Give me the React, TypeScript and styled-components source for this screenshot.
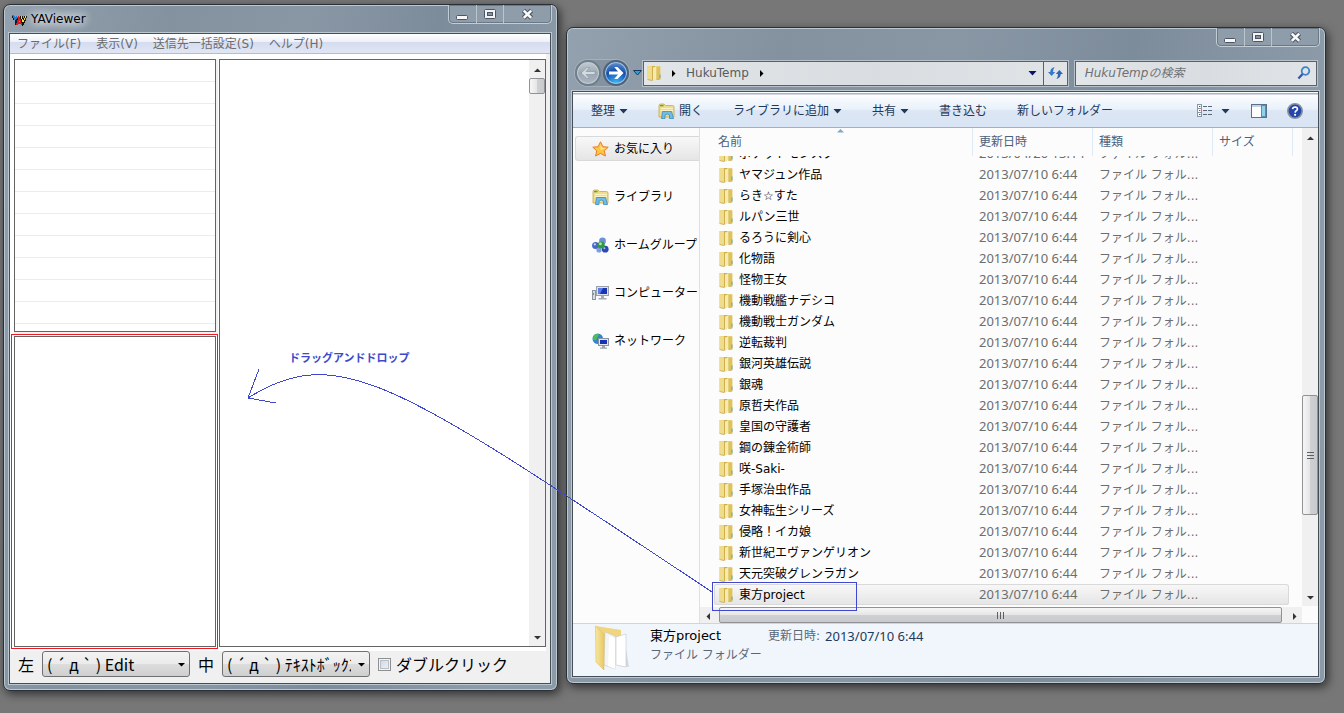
import React from "react";
import styled, { createGlobalStyle, css } from "styled-components";

const ui = `"DejaVu Sans", "Noto Sans CJK JP", sans-serif`;
const dateFont = `"Noto Sans", "Noto Sans CJK JP", sans-serif`;
const cjk = `"Noto Sans CJK JP", sans-serif`;

const Global = createGlobalStyle`
  * { box-sizing: border-box; }
  body { margin: 0; background: #777; }
  button, input, select { font: inherit; color: inherit; margin: 0; }
  button { padding: 0; border: 0; background: none; }
  svg { display: block; flex: none; }
`;

/* ---------- desktop and window frames ---------- */

const Desktop = styled.div`
  position: relative;
  height: 100vh;
  min-height: 480px;
  display: grid;
  grid-template-columns: minmax(0, 555fr) minmax(0, 760fr);
  grid-template-rows: minmax(0, 1fr);
  gap: 8px;
  padding: 4px 18px 22px 3px;
  background: #777;
  font: 12px/18px ${ui};
  color: #000;
  overflow: hidden;
`;

const WindowFrame = styled.section<{ $inset?: boolean }>`
  position: relative;
  display: flex;
  flex-direction: column;
  min-width: 0;
  margin: ${(p) => (p.$inset ? "23px 0 7px" : "0")};
  padding: 0 6px 6px 5px;
  border: 1px solid #2a3037;
  border-radius: 7px;
  background: linear-gradient(100deg, #93a0ad 0, #8492a0 25%, #8997a5 45%, #7d8c9b 65%, #8e9caa 90%, #8c9aa8 100%);
  box-shadow: inset 0 0 0 1px #bcc8d1, 2px 3px 10px rgba(0, 0, 0, 0.6);
`;

const Client = styled.div`
  flex: 1;
  min-height: 0;
  display: flex;
  flex-direction: column;
  border: 1px solid #454d57;
  box-shadow: 0 0 0 1px #bcc8d1;
  background: #f0f0f0;
`;

const Caption = styled.header`
  display: flex;
  align-items: center;
  height: 28px;
  gap: 4px;
  padding-left: 2px;
`;

const CaptionTitle = styled.h1`
  margin: 0;
  font: inherit;
  text-shadow: 0 0 8px #fff, 0 0 8px #dde4ea, 0 0 12px #dde4ea;
`;

const WindowButtons = styled.div`
  position: absolute;
  top: 0;
  right: 5px;
  display: flex;
  height: 19px;
  border: 1px solid #c3cdd5;
  border-top: 0;
  border-radius: 0 0 5px 5px;
  background: #8f9dab;
  box-shadow: inset 0 0 0 1px #6b7885;
`;

const WindowButton = styled.button<{ $wide?: boolean }>`
  display: grid;
  place-items: center;
  width: ${(p) => (p.$wide ? 48 : 27)}px;
  & + & { border-left: 1px solid #bac5ce; }
`;

function Controls() {
  return (
    <WindowButtons>
      <WindowButton aria-label="最小化">
        <svg width="13" height="13"><rect x="0.5" y="7.5" width="11" height="4" rx="1" fill="#f7f7f7" stroke="#4c5564" /></svg>
      </WindowButton>
      <WindowButton aria-label="最大化">
        <svg width="13" height="13">
          <rect x="0.5" y="1.5" width="11" height="9" rx="1" fill="#f4f4f4" stroke="#4c5564" />
          <rect x="3.5" y="4.5" width="5" height="3" fill="#8593a6" stroke="#4c5564" />
        </svg>
      </WindowButton>
      <WindowButton $wide aria-label="閉じる">
        <svg width="13" height="13">
          <path d="M2.5 2.5 L10.5 10 M10.5 2.5 L2.5 10" stroke="#4c5564" strokeWidth="4.6" />
          <path d="M2.8 2.6 L10.2 9.9 M10.2 2.6 L2.8 9.9" stroke="#fafafa" strokeWidth="2.6" />
        </svg>
      </WindowButton>
    </WindowButtons>
  );
}

/* ---------- scroll bars ---------- */

const Bar = styled.div<{ $horizontal?: boolean }>`
  display: flex;
  flex-direction: ${(p) => (p.$horizontal ? "row" : "column")};
  ${(p) => (p.$horizontal ? "height: 16px;" : "width: 16px;")}
  flex: none;
  background: #f0f0f0;
`;

const BarButton = styled.button`
  flex: none;
  width: 16px;
  height: 18px;
  display: grid;
  place-items: center;
`;

const BarSpace = styled.div<{ $grow: number }>`
  flex: ${(p) => p.$grow} 0 0;
`;

const Thumb = styled.div<{ $grow?: number; $horizontal?: boolean }>`
  display: grid;
  place-items: center;
  flex: ${(p) => (p.$grow ? `${p.$grow} 0 0` : "0 0 16px")};
  border: 1px solid #909296;
  border-radius: 2px;
  background: linear-gradient(${(p) => (p.$horizontal ? "180deg" : "90deg")}, #f6f6f6, #e6e6e7 48%, #cfd0d3 52%, #c9cacd);
`;

const Grip = ({ vertical }: { vertical?: boolean }) => (
  <svg width="9" height="9" stroke="#5c5f66" strokeWidth="1">
    {[1.5, 4.5, 7.5].map((n) => (
      <path key={n} d={vertical ? `M1 ${n}H8` : `M${n} 1V8`} />
    ))}
  </svg>
);

const arrowPaths = {
  up: "M0 6 L3.5 2.5 L7 6Z",
  down: "M0 2 L3.5 5.5 L7 2Z",
  left: "M5 0 L1.5 3.5 L5 7Z",
  right: "M2 0 L5.5 3.5 L2 7Z",
};

const Arrow = ({ dir, color = "#333" }: { dir: keyof typeof arrowPaths; color?: string }) => (
  <svg width="7" height="7"><path d={arrowPaths[dir]} fill={color} /></svg>
);

/* ---------- viewer window ---------- */

const MenuBar = styled.nav`
  flex: none;
  display: flex;
  align-items: center;
  gap: 15px;
  height: 20px;
  padding-left: 7px;
  border-bottom: 1px solid #b6bccc;
  background: linear-gradient(#fff, #eef1f8 40%, #d5dcef 42%, #e1e6f5);
  color: #6d6d6d;
  white-space: nowrap;
`;

const Panes = styled.div`
  flex: 1;
  min-height: 0;
  display: grid;
  grid-template-columns: minmax(0, 207fr) minmax(0, 328fr);
  gap: 1px;
  margin-right: 4px;
  padding: 5px 0 2px 1px;
  background: #fff;
`;

const LeftPanes = styled.div`
  display: grid;
  grid-template-rows: 273fr 315fr;
  gap: 2px;
  background: linear-gradient(90deg, #fff 3px, #f0f0f0 3px);
`;

const LinedList = styled.div`
  margin: 0 2px 0 3px;
  border: 1px solid #646464;
  background: repeating-linear-gradient(#fff 0 21px, #ececec 21px 22px);
`;

const RedOutline = styled.div`
  display: flex;
  padding: 1px 1px 1px 2px;
  border: 1px solid #ed1c24;
  background: #fff;
`;

const Pane = styled.div<{ $main?: boolean }>`
  flex: 1;
  display: flex;
  justify-content: flex-end;
  margin-bottom: ${(p) => (p.$main ? 2 : 0)}px;
  border: 1px solid #646464;
  background: #fff;
`;

const OptionBar = styled.footer`
  flex: none;
  display: flex;
  align-items: center;
  height: 32px;
  padding: 0 0 6px 8px;
  gap: 8px;
  font: 16px/24px ${cjk};
  white-space: nowrap;
`;

const SelectWrap = styled.label`
  display: flex;
  align-items: center;
  gap: 8px;
`;

const SelectBox = styled.span`
  position: relative;
  width: 148px;
`;

const Select = styled.select`
  appearance: none;
  display: block;
  width: 100%;
  height: 26px;
  padding: 0 18px 0 4px;
  border: 1px solid #707070;
  border-radius: 3px;
  background: linear-gradient(#f3f3f3, #ebebeb 48%, #dddddd 50%, #cfcfcf);
  font: 16px/22px ${cjk};
`;

const Caret = styled.span`
  position: absolute;
  right: 5px;
  top: 10px;
  pointer-events: none;
`;

const CheckLabel = styled.label`
  display: flex;
  align-items: center;
  gap: 5px;
`;

const Check = styled.input`
  appearance: none;
  width: 13px;
  height: 13px;
  border: 1px solid #8e8f8f;
  background: linear-gradient(135deg, #cfd3da, #f4f5f6);
  box-shadow: inset 0 0 0 1px #f4f4f4, inset 0 0 0 2px #b9bfc9;
`;

function PaneSelect({ label, value }: { label: string; value: string }) {
  return (
    <SelectWrap>
      {label}
      <SelectBox>
        <Select defaultValue={value}>
          <option>{value}</option>
        </Select>
        <Caret><Arrow dir="down" color="#000" /></Caret>
      </SelectBox>
    </SelectWrap>
  );
}

function ViewerWindow() {
  return (
    <WindowFrame>
      <Caption>
        <svg width="16" height="16" fill="none" shapeRendering="crispEdges">
          <path d="M2 4v2h1v2h2v5h1V8h1V6" stroke="#14181f" strokeWidth="1.4" />
          <path d="M2 4l2 4 2-2" stroke="#1f7fc9" strokeWidth="1.6" />
          <path d="M6 14l2-7 3 7M7 12h4" stroke="#d81a1a" strokeWidth="1.8" />
          <path d="M10 5l2 7 3-7" stroke="#14120a" strokeWidth="2.8" />
          <path d="M10 5l2 6 3-6" stroke="#f4e22c" strokeWidth="1.2" />
        </svg>
        <CaptionTitle>YAViewer</CaptionTitle>
      </Caption>
      <Controls />
      <Client>
        <MenuBar>
          <button>ファイル(F)</button>
          <button>表示(V)</button>
          <button>送信先一括設定(S)</button>
          <button>ヘルプ(H)</button>
        </MenuBar>
        <Panes>
          <LeftPanes>
            <LinedList />
            <RedOutline><Pane /></RedOutline>
          </LeftPanes>
          <Pane $main>
            <Bar>
              <BarButton aria-label="上へ"><Arrow dir="up" /></BarButton>
              <Thumb />
              <BarSpace $grow={1} />
              <BarButton aria-label="下へ"><Arrow dir="down" /></BarButton>
            </Bar>
          </Pane>
        </Panes>
        <OptionBar>
          <PaneSelect label="左" value="( ´ д ` ) Edit" />
          <PaneSelect label="中" value="( ´ д ` ) ﾃｷｽﾄﾎﾞｯｸｽ" />
          <CheckLabel><Check type="checkbox" />ダブルクリック</CheckLabel>
        </OptionBar>
      </Client>
    </WindowFrame>
  );
}

/* ---------- explorer icons ---------- */

const FolderIcon = () => (
  <svg width="14" height="16" viewBox="0 0 14 16">
    <path d="M0.5 1 H12.5 Q13.5 1 13.5 2 V14 H0.5Z" fill="#e6cd70" />
    <path d="M0.5 1 L5 1.5 V15.5 L0.5 14.5Z" fill="#efdc8c" />
    <path d="M5 1 H8 V14.5 L5 15.8Z" fill="#cfb04c" />
    <path d="M6 2.5 L9.5 1.5 V14 L6 15.5Z" fill="#f7eab0" />
    <path d="M9.5 2 L13 2 V14 L9.5 14.6Z" fill="#dec25e" />
    <path d="M0.5 14.5 L5 15.5 M9.5 14.5 L13.5 14" stroke="#c5a548" strokeWidth="0.8" />
    <path d="M13 9.5v3.5" stroke="#5fa7a4" />
  </svg>
);

const LibraryIcon = () => (
  <svg width="17" height="16" viewBox="0 0 17 16">
    <path d="M1 2.5 Q1 1 2.5 1 H6 L7.5 2.5 H14.5 Q16 2.5 16 4 V14 H1Z" fill="#f0dc8a" stroke="#c6a84c" strokeWidth="0.8" />
    <path d="M2 2.6H5.5" stroke="#4ba83b" strokeWidth="1.4" />
    <path d="M3 5.5H15 M3 7.5H15" stroke="#fbf2c4" />
    <path d="M3.5 15.5 L4.5 8.5 H13.5 L15.5 15.5 H11.5 V12 Q9 10 7 12 V15.5Z" fill="#6fbde6" stroke="#3a8cbd" strokeWidth="0.8" />
  </svg>
);

const StarIcon = () => (
  <svg width="17" height="16" viewBox="0 0 17 16">
    <path d="M8.5 0.8 L10.9 5.7 L16.2 6.2 L12.3 9.8 L13.4 15 L8.5 12.4 L3.6 15 L4.7 9.8 L0.8 6.2 L6.1 5.7Z" fill="#fcc73c" stroke="#e87b2c" />
    <path d="M8.5 3 L10 6.8 L13.5 7.2 L8.5 9Z" fill="#ffe48c" />
  </svg>
);

const HomegroupIcon = () => (
  <svg width="17" height="16" viewBox="0 0 17 16">
    <circle cx="10.5" cy="4" r="3.4" fill="#6f8fd8" />
    <circle cx="3.6" cy="8.5" r="3.5" fill="#4667c8" />
    <circle cx="13.2" cy="12.2" r="3.4" fill="#2c4bb0" />
    <circle cx="7" cy="13" r="2.6" fill="#7f9ce0" />
    <circle cx="9.2" cy="8" r="3.6" fill="#2f9a40" />
    <circle cx="8.4" cy="6.8" r="1.5" fill="#a6e3a0" />
    <circle cx="2.8" cy="7.4" r="1.1" fill="#cdd9f7" />
    <circle cx="12.4" cy="11.2" r="1" fill="#a9bdf0" />
  </svg>
);

const ComputerIcon = () => (
  <svg width="17" height="16" viewBox="0 0 17 16">
    <rect x="0.5" y="5.5" width="3" height="9" fill="#d8dde2" stroke="#8c949c" />
    <path d="M1.5 8v2" stroke="#4fb848" />
    <rect x="4.5" y="1.5" width="12" height="9" fill="#dfe3e8" stroke="#9aa2ac" />
    <rect x="6" y="3" width="9" height="6" fill="#1b34b5" />
    <path d="M6 3H11L8 9H6Z" fill="#5d7ce6" />
    <path d="M9 11H12V13H14.5V14.5H6.5V13H9Z" fill="#a4abb4" />
  </svg>
);

const NetworkIcon = () => (
  <svg width="17" height="16" viewBox="0 0 17 16">
    <circle cx="5.8" cy="5.8" r="5.3" fill="#2f86d6" />
    <path d="M2 2 Q6 0 7 2 Q5 4 4 7 Q1 8 1 5Z M6 6 Q9 5 10 8 L7 11Z" fill="#4ec04e" />
    <rect x="6.5" y="5.5" width="10" height="7" fill="#e3e7ec" stroke="#8b949e" />
    <rect x="8" y="7" width="7" height="4" fill="#1532b4" />
    <path d="M10 13H13V14.5H15V15.8H8V14.5H10Z" fill="#9ba3ad" />
  </svg>
);

const LargeFolderIcon = () => (
  <svg width="36" height="46" viewBox="0 0 36 46">
    <defs>
      <linearGradient id="cover" x1="0" x2="1"><stop offset="0" stopColor="#f8e7a2" /><stop offset="1" stopColor="#e9c866" /></linearGradient>
    </defs>
    <path d="M30 12 L35 42 L24 41Z" fill="#d5d8df" />
    <path d="M2 1 L27 5 V12 H12 L9 44Z" fill="#eed57e" />
    <path d="M11 7 L21 11 V44 L10 40Z" fill="#f4f4f5" stroke="#c8c8c8" strokeWidth="0.6" />
    <path d="M15 11 L21 13 V44 L14 41Z" fill="#fff" />
    <path d="M22 12 L32 9 V42 L22 40Z" fill="#fff" stroke="#c6c8cc" strokeWidth="0.6" />
    <path d="M1.5 1 L10 9 V45 L2 37Z" fill="url(#cover)" stroke="#dfbf5c" strokeWidth="0.6" />
  </svg>
);

/* ---------- explorer window ---------- */

const NavRow = styled.div`
  display: flex;
  align-items: center;
  gap: 7px;
  height: 63px;
  padding: 32px 2px 5px 3px;
`;

const History = styled.div`
  display: flex;
  align-items: center;
  gap: 4px;
  width: 61px;
`;

const RoundPair = styled.div`
  display: flex;
  gap: 2px;
  border-radius: 13px;
  background: #8592a0;
  box-shadow: 0 0 0 1px #a5b0bb;
`;

const RoundButton = styled.button<{ $active?: boolean }>`
  display: grid;
  place-items: center;
  flex: none;
  width: 26px;
  height: 26px;
  border: 2px solid ${(p) => (p.$active ? "#4f6479" : "#6f7e8b")};
  border-radius: 50%;
  box-shadow: inset 0 0 0 1px ${(p) => (p.$active ? "#9fc6ee" : "#c4ced6")};
  background: ${(p) =>
    p.$active
      ? "radial-gradient(circle at 50% 100%, #3fc3f5 0, #1c62c0 45%, #174fa8 55%, #7fa8dd 100%)"
      : "linear-gradient(#c3cbd2, #9ba8b3 50%, #a9b5bf)"};
`;

const fieldBox = css`
  height: 25px;
  border: 1px solid #58626c;
  box-shadow: 0 0 0 1px #b7c1ca;
  background: linear-gradient(90deg, #e3e6e8, #d9dce0 55%, #e0e4e7);
`;

const Address = styled.div`
  ${fieldBox}
  flex: 424 1 0;
  min-width: 0;
  display: flex;
  align-items: center;
  color: #555b62;
`;

const Crumb = styled.button`
  display: flex;
  align-items: center;
  gap: 9px;
  padding-left: 3px;
`;

const AddressButton = styled.button<{ $divided?: boolean }>`
  display: grid;
  place-items: center;
  width: ${(p) => (p.$divided ? 24 : 20)}px;
  height: 100%;
  border-left: ${(p) => (p.$divided ? "1px solid #58626c" : "0")};
`;

const Search = styled.form`
  ${fieldBox}
  flex: 227 1 0;
  min-width: 0;
  display: flex;
  align-items: center;
  padding: 0 5px 0 9px;
`;

const SearchInput = styled.input`
  flex: 1;
  min-width: 0;
  padding: 0;
  border: 0;
  outline: 0;
  background: none;
  &::placeholder { color: #6d7075; opacity: 1; font-style: italic; }
`;

const Spring = styled.span`
  flex: 1;
`;

const ToolBar = styled.div`
  flex: none;
  display: flex;
  align-items: center;
  height: 36px;
  padding: 2px 15px 0 18px;
  border-bottom: 1px solid #a0afc3;
  border-top: 1px solid #fff;
  background: linear-gradient(#a9b3c6 0 1px, #fbfdff 2px, #e9f1fb 48%, #dce6f4 52%, #d9e5f4);
  color: #1e395b;
  white-space: nowrap;
`;

const ToolButton = styled.button<{ $after?: number }>`
  display: flex;
  align-items: center;
  gap: 4px;
  margin-right: ${(p) => p.$after ?? 30}px;
`;

const Body = styled.div`
  flex: 1;
  min-height: 0;
  display: grid;
  grid-template-columns: 127px minmax(0, 1fr);
  grid-template-rows: minmax(0, 1fr);
  background: #fcfcfc;
`;

const Sidebar = styled.nav`
  display: flex;
  flex-direction: column;
  gap: 23px;
  padding: 8px 0 0 2px;
  border-right: 1px solid #d4e2f2;
  overflow: hidden;
`;

const Place = styled.a<{ $current?: boolean }>`
  display: flex;
  align-items: center;
  gap: 5px;
  height: 25px;
  padding-left: 16px;
  border: 1px solid ${(p) => (p.$current ? "#d9d9d9" : "transparent")};
  border-right: 0;
  border-radius: 3px 0 0 3px;
  background: ${(p) => (p.$current ? "linear-gradient(#f8f8f8, #e5e5e5)" : "none")};
  color: #000;
  text-decoration: none;
  white-space: nowrap;
`;

const Listing = styled.div`
  display: grid;
  grid-template-columns: minmax(0, 1fr) 16px;
  grid-template-rows: minmax(0, 1fr) 16px;
  row-gap: 1px;
  min-height: 0;
`;

const FileTable = styled.table`
  display: flex;
  flex-direction: column;
  min-height: 0;
  padding-right: 9px;
`;

const HeadRow = styled.tr`
  display: grid;
  grid-template-columns: minmax(0, 1fr) 120px 120px 80px;
  height: 28px;
`;

const HeadCell = styled.th<{ $first?: boolean }>`
  position: relative;
  padding: 5px 0 0 ${(p) => (p.$first ? 18 : 6)}px;
  border-right: 1px solid #dfeaf7;
  color: #4c607a;
  font-weight: normal;
  text-align: left;
`;

const SortMark = styled.span`
  position: absolute;
  top: 0;
  left: 50%;
`;

const Rows = styled.tbody`
  flex: 1;
  min-height: 0;
  display: flex;
  flex-direction: column;
  justify-content: flex-end;
  padding: 0 4px 1px 14px;
  overflow: hidden;
`;

const Row = styled.tr<{ $selected?: boolean }>`
  flex: none;
  display: grid;
  grid-template-columns: minmax(0, 1fr) 120px 196px;
  align-items: center;
  height: 21px;
  border-radius: 3px;
  ${(p) =>
    p.$selected &&
    css`
      background: linear-gradient(#f8f8f8, #e5e5e5);
      box-shadow: inset 0 0 0 1px #d9d9d9;
    `}
`;

const NameCell = styled.td`
  display: flex;
  align-items: center;
  gap: 6px;
  padding: 0 0 0 5px;
  white-space: nowrap;
`;

const DateCell = styled.td`
  padding: 0 0 2px 6px;
  color: #6d6d6d;
  font: 13px/18px ${dateFont};
`;

const TypeCell = styled.td`
  padding: 0 0 0 6px;
  color: #6d6d6d;
`;

const Details = styled.footer`
  flex: none;
  display: grid;
  grid-template-columns: 36px 84px auto 1fr;
  grid-template-rows: 20px 18px;
  column-gap: 5px;
  align-items: center;
  height: 53px;
  padding: 2px 0 0 21px;
  border-top: 1px solid #c9d6ea;
  background: #f1f5fc;
  color: #5a6779;
  white-space: nowrap;
`;

const DetailIcon = styled.div`
  grid-row: 1 / 3;
  padding-top: 6px;
`;

const DetailName = styled.strong`
  padding-left: 15px;
  color: #000;
  font: 13px/20px ${ui};
`;

const DetailType = styled.span`
  grid-column: 2;
  padding-left: 15px;
`;

const DetailLabel = styled.span`
  padding-left: 44px;
`;

const DetailDate = styled.span`
  color: #1e395b;
  font: 13px/20px ${dateFont};
`;

const folders = [
  "ヤマジュン作品", "らき☆すた", "ルパン三世", "るろうに剣心", "化物語", "怪物王女",
  "機動戦艦ナデシコ", "機動戦士ガンダム", "逆転裁判", "銀河英雄伝説", "銀魂", "原哲夫作品",
  "皇国の守護者", "鋼の錬金術師", "咲-Saki-", "手塚治虫作品", "女神転生シリーズ", "侵略！イカ娘",
  "新世紀エヴァンゲリオン", "天元突破グレンラガン", "東方project",
];

const files = [
  { name: "ポケットモンスター", date: "2013/04/20 13:14" },
  ...folders.map((name) => ({ name, date: "2013/07/10 6:44" })),
];

const places = [
  { name: "お気に入り", icon: <StarIcon /> },
  { name: "ライブラリ", icon: <LibraryIcon /> },
  { name: "ホームグループ", icon: <HomegroupIcon /> },
  { name: "コンピューター", icon: <ComputerIcon /> },
  { name: "ネットワーク", icon: <NetworkIcon /> },
];

const DropMark = ({ color = "#1e395b" }: { color?: string }) => (
  <svg width="9" height="5"><path d="M0.5 0H8.5L4.5 4.5Z" fill={color} /></svg>
);

function ExplorerWindow() {
  return (
    <WindowFrame $inset>
      <Controls />
      <NavRow>
        <History>
          <RoundPair>
            <RoundButton aria-label="戻る">
              <svg width="18" height="16"><path d="M2 8 L8 2.5 H10.5 L7 6.5 H16 V9.5 H7 L10.5 13.5 H8Z" fill="#d3dae0" stroke="#8493a0" strokeWidth="0.6" /></svg>
            </RoundButton>
            <RoundButton $active aria-label="進む">
              <svg width="18" height="16"><path d="M16.5 8 L10.5 2 H7.2 L11 6.4 H2 V9.6 H11 L7.2 14 H10.5Z" fill="#fff" /></svg>
            </RoundButton>
          </RoundPair>
          <svg width="9" height="6"><path d="M0.5 0.5H8.5L4.5 5Z" fill="#2aa0d8" stroke="#173a5e" /></svg>
        </History>
        <Address>
          <Crumb>
            <FolderIcon />
            <Arrow dir="right" color="#000" />
            HukuTemp
            <Arrow dir="right" color="#000" />
          </Crumb>
          <Spring />
          <AddressButton aria-label="履歴"><DropMark color="#0a1464" /></AddressButton>
          <AddressButton $divided aria-label="更新">
            <svg width="15" height="14" viewBox="0 0 15 14">
              <path d="M0 6 L3.6 10 L7.2 6 H5 Q5 3.2 6.6 1 Q2.4 2 2.2 6Z" fill="#3577cf" />
              <path d="M7.8 8 L11.4 4 L15 8 H12.8 Q12.6 12 8.4 13 Q10 10.8 10 8Z" fill="#2f64b8" />
            </svg>
          </AddressButton>
        </Address>
        <Search>
          <SearchInput aria-label="検索" placeholder="HukuTempの検索" />
          <svg width="14" height="14" fill="none">
            <circle cx="8.5" cy="5" r="3.8" stroke="#3f83cc" strokeWidth="1.8" />
            <path d="M5.6 8 L1.4 12.4" stroke="#2c55b0" strokeWidth="2.2" />
          </svg>
        </Search>
      </NavRow>
      <Client>
        <ToolBar>
          <ToolButton>整理 <DropMark /></ToolButton>
          <ToolButton><LibraryIcon />開く</ToolButton>
          <ToolButton>ライブラリに追加 <DropMark /></ToolButton>
          <ToolButton>共有 <DropMark /></ToolButton>
          <ToolButton>書き込む</ToolButton>
          <ToolButton>新しいフォルダー</ToolButton>
          <Spring />
          <ToolButton $after={21} aria-label="表示方法">
            <svg width="16" height="14" viewBox="0 0 16 14" fill="none">
              {[1, 5, 9].map((y, i) => (
                <g key={y}>
                  <rect x="0.5" y={y - 0.5} width="4" height="4" fill="#fff" stroke="#8a96a6" />
                  <path d={`M2 ${y + 1.5}h1.4`} stroke={i === 1 ? "#d33" : "#456"} />
                  <path d={`M6 ${y + 1.5}h4m1 0h4`} stroke="#5b6776" />
                </g>
              ))}
            </svg>
            <span />
            <DropMark />
          </ToolButton>
          <ToolButton $after={20} aria-label="プレビュー">
            <svg width="16" height="14">
              <rect x="0.5" y="0.5" width="15" height="13" fill="#fff" stroke="#5c7089" />
              <path d="M1 2H10" stroke="#c4d2e2" strokeWidth="2" />
              <rect x="10.5" y="1.5" width="4" height="11" fill="#8ed1ea" stroke="#4d93b5" />
            </svg>
          </ToolButton>
          <ToolButton $after={0} aria-label="ヘルプ">
            <svg width="16" height="16">
              <circle cx="8" cy="8" r="7.2" fill="#2346a8" stroke="#8b929d" strokeWidth="1.6" />
              <path d="M5.6 6.2 Q5.8 4 8.1 4 Q10.5 4.1 10.4 6 Q10.3 7.2 9 7.9 Q8.2 8.5 8.1 9.6" fill="none" stroke="#fff" strokeWidth="1.7" />
              <circle cx="8.1" cy="11.8" r="1.1" fill="#fff" />
            </svg>
          </ToolButton>
        </ToolBar>
        <Body>
          <Sidebar>
            {places.map((p, i) => (
              <Place key={p.name} href="#" $current={i === 0}>{p.icon}{p.name}</Place>
            ))}
          </Sidebar>
          <Listing>
            <FileTable>
              <thead>
                <HeadRow>
                  <HeadCell $first>
                    名前
                    <SortMark><svg width="9" height="5"><path d="M1 4.5 L4.5 1 L8 4.5Z" fill="#7ea8c8" /></svg></SortMark>
                  </HeadCell>
                  <HeadCell>更新日時</HeadCell>
                  <HeadCell>種類</HeadCell>
                  <HeadCell>サイズ</HeadCell>
                </HeadRow>
              </thead>
              <Rows>
                {files.map((f) => (
                  <Row key={f.name} $selected={f.name === "東方project"}>
                    <NameCell><FolderIcon />{f.name}</NameCell>
                    <DateCell>{f.date}</DateCell>
                    <TypeCell>ファイル フォル...</TypeCell>
                  </Row>
                ))}
              </Rows>
            </FileTable>
            <Bar>
              <BarButton aria-label="上へ"><Arrow dir="up" /></BarButton>
              <BarSpace $grow={250} />
              <Thumb $grow={119}><Grip vertical /></Thumb>
              <BarSpace $grow={73} />
              <BarButton aria-label="下へ"><Arrow dir="down" /></BarButton>
            </Bar>
            <Bar $horizontal>
              <BarButton aria-label="左へ"><Arrow dir="left" /></BarButton>
              <BarSpace $grow={3} />
              <Thumb $horizontal $grow={562}><Grip /></Thumb>
              <BarSpace $grow={4} />
              <BarButton aria-label="右へ"><Arrow dir="right" /></BarButton>
            </Bar>
          </Listing>
        </Body>
        <Details>
          <DetailIcon><LargeFolderIcon /></DetailIcon>
          <DetailName>東方project</DetailName>
          <DetailLabel>更新日時:</DetailLabel>
          <DetailDate>2013/07/10 6:44</DetailDate>
          <DetailType>ファイル フォルダー</DetailType>
        </Details>
      </Client>
    </WindowFrame>
  );
}

/* ---------- drawn notes over the windows ---------- */

const Ink = styled.svg`
  position: absolute;
  inset: 0;
  width: 100%;
  height: 100%;
  pointer-events: none;
`;

const Note = styled.p`
  position: absolute;
  left: 289px;
  top: 348px;
  margin: 0;
  color: #3f48cc;
  font: bold 11px/18px ${cjk};
`;

export default function App() {
  return (
    <>
      <Global />
      <Desktop>
        <ViewerWindow />
        <ExplorerWindow />
        <Ink viewBox="0 0 1344 713" preserveAspectRatio="none" fill="none" stroke="#3f48cc" shapeRendering="crispEdges">
          <path d="M712 592 C400 385 340 340 248 398" />
          <path d="M259 369 L248 398 L276 403" />
          <rect x="712.5" y="582.5" width="144" height="28" />
        </Ink>
        <Note>ドラッグアンドドロップ</Note>
      </Desktop>
    </>
  );
}
